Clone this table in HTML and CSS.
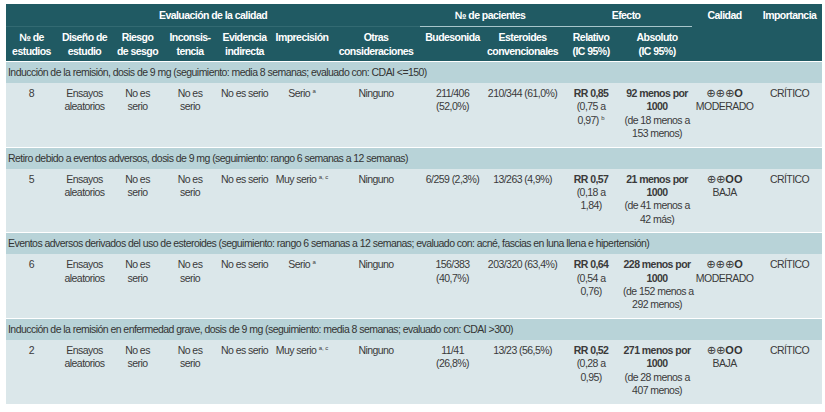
FILE: index.html
```html
<!DOCTYPE html>
<html lang="es">
<head>
<meta charset="utf-8">
<title>Perfil de evidencia GRADE</title>
<link rel="stylesheet" href="styles.css">
</head>
<body>
<table class="grade">
  <colgroup>
    <col class="w51"><col class="w55"><col class="w51"><col class="w54"><col class="w55"><col class="w60"><col class="w88">
    <col class="w65"><col class="w75"><col class="w62"><col class="w70"><col class="w65"><col class="w65">
  </colgroup>
  <thead>
    <tr class="h1">
      <th colspan="7" class="group">Evaluación de la calidad</th>
      <th colspan="2" class="group light">№ de pacientes</th>
      <th colspan="2" class="group light">Efecto</th>
      <th rowspan="2">Calidad</th>
      <th rowspan="2">Importancia</th>
    </tr>
    <tr class="h2">
      <th>№ de<br>estudios</th>
      <th>Diseño de<br>estudio</th>
      <th>Riesgo<br>de sesgo</th>
      <th>Inconsis-<br>tencia</th>
      <th>Evidencia<br>indirecta</th>
      <th>Imprecisión</th>
      <th>Otras<br>consideraciones</th>
      <th>Budesonida</th>
      <th>Esteroides<br>convencionales</th>
      <th>Relativo<br>(IC 95%)</th>
      <th>Absoluto<br>(IC 95%)</th>
    </tr>
  </thead>
  <tbody>
    <tr class="sec"><td colspan="13">Inducción de la remisión, dosis de 9 mg (seguimiento: media 8 semanas; evaluado con: CDAI &lt;=150)</td></tr>
    <tr class="row">
      <td>8</td>
      <td>Ensayos<br>aleatorios</td>
      <td>No es<br>serio</td>
      <td>No es<br>serio</td>
      <td>No es serio</td>
      <td>Serio <sup>a</sup></td>
      <td>Ninguno</td>
      <td>211/406<br>(52,0%)</td>
      <td>210/344 (61,0%)</td>
      <td><b>RR 0,85</b><br>(0,75 a<br>0,97) <sup>b</sup></td>
      <td><b>92 menos por<br>1000</b><br>(de 18 menos a<br>153 menos)</td>
      <td><span class="sym">⊕⊕⊕</span><b class="o">O</b><br>MODERADO</td>
      <td>CRÍTICO</td>
    </tr>
    <tr class="sec"><td colspan="13">Retiro debido a eventos adversos, dosis de 9 mg (seguimiento: rango 6 semanas a 12 semanas)</td></tr>
    <tr class="row">
      <td>5</td>
      <td>Ensayos<br>aleatorios</td>
      <td>No es<br>serio</td>
      <td>No es<br>serio</td>
      <td>No es serio</td>
      <td>Muy serio <sup>a, c</sup></td>
      <td>Ninguno</td>
      <td>6/259 (2,3%)</td>
      <td>13/263 (4,9%)</td>
      <td><b>RR 0,57</b><br>(0,18 a<br>1,84)</td>
      <td><b>21 menos por<br>1000</b><br>(de 41 menos a<br>42 más)</td>
      <td><span class="sym">⊕⊕</span><b class="o">OO</b><br>BAJA</td>
      <td>CRÍTICO</td>
    </tr>
    <tr class="sec"><td colspan="13">Eventos adversos derivados del uso de esteroides (seguimiento: rango 6 semanas a 12 semanas; evaluado con: acné, fascias en luna llena e hipertensión)</td></tr>
    <tr class="row">
      <td>6</td>
      <td>Ensayos<br>aleatorios</td>
      <td>No es<br>serio</td>
      <td>No es<br>serio</td>
      <td>No es serio</td>
      <td>Serio <sup>a</sup></td>
      <td>Ninguno</td>
      <td>156/383<br>(40,7%)</td>
      <td>203/320 (63,4%)</td>
      <td><b>RR 0,64</b><br>(0,54 a<br>0,76)</td>
      <td><b>228 menos por<br>1000</b><br>(de 152 menos a<br>292 menos)</td>
      <td><span class="sym">⊕⊕⊕</span><b class="o">O</b><br>MODERADO</td>
      <td>CRÍTICO</td>
    </tr>
    <tr class="sec"><td colspan="13">Inducción de la remisión en enfermedad grave, dosis de 9 mg (seguimiento: media 8 semanas; evaluado con: CDAI &gt;300)</td></tr>
    <tr class="row">
      <td>2</td>
      <td>Ensayos<br>aleatorios</td>
      <td>No es<br>serio</td>
      <td>No es<br>serio</td>
      <td>No es serio</td>
      <td>Muy serio <sup>a, c</sup></td>
      <td>Ninguno</td>
      <td>11/41<br>(26,8%)</td>
      <td>13/23 (56,5%)</td>
      <td><b>RR 0,52</b><br>(0,28 a<br>0,95)</td>
      <td><b>271 menos por<br>1000</b><br>(de 28 menos a<br>407 menos)</td>
      <td><span class="sym">⊕⊕</span><b class="o">OO</b><br>BAJA</td>
      <td>CRÍTICO</td>
    </tr>
  </tbody>
</table>
</body>
</html>
```

FILE: styles.css
```css
* { box-sizing: border-box; }

body {
  margin: 0;
  padding: 4px 3px 0 6px;
  background: #ffffff;
  font-family: "Liberation Sans Narrow", "Arial Narrow", "Liberation Sans", Arial, sans-serif;
  font-size: 10.5px;
  letter-spacing: -0.55px;
  color: #3a3a3a;
}

.grade {
  width: 816px;
  border-collapse: collapse;
  table-layout: fixed;
}

.w51 { width: 51px; }
.w54 { width: 54px; }
.w55 { width: 55px; }
.w60 { width: 60px; }
.w62 { width: 62px; }
.w65 { width: 65px; }
.w70 { width: 70px; }
.w75 { width: 75px; }
.w88 { width: 88px; }

.grade th {
  background: #205a63;
  color: #ffffff;
  font-weight: bold;
  line-height: 14px;
  padding: 3px 1px;
  vertical-align: top;
  text-align: center;
  white-space: nowrap;
}

.h1 th {
  padding: 4px 1px;
}

.h1 .group {
  border-bottom: 1px solid #336a72;
}

.h1 .group.light {
  border-bottom-color: #a8c6cb;
}

.sec td {
  background: #b8d3d8;
  border-top: 1px solid #ffffff;
  padding: 3px 2px;
  line-height: 15px;
  text-align: left;
  white-space: nowrap;
  color: #333333;
}

.row td {
  background: #dbe7ea;
  padding: 4px 1px 6px;
  line-height: 13.4px;
  vertical-align: top;
  text-align: center;
  white-space: nowrap;
}

sup {
  font-size: 6px;
  letter-spacing: 0;
  line-height: 0;
  vertical-align: 4px;
}

.sym {
  font-family: "DejaVu Sans", sans-serif;
  font-size: 11.5px;
  letter-spacing: -0.3px;
  color: #444444;
}

.o {
  font-family: "Liberation Sans", Arial, sans-serif;
  font-size: 11px;
  letter-spacing: 0;
  font-weight: bold;
  color: #333333;
}
```
